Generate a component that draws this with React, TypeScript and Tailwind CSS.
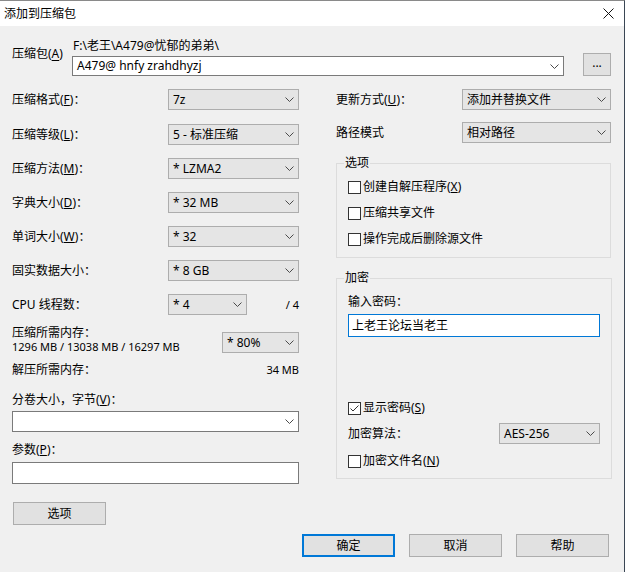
import React from "react";
import clsx from "clsx";
import { twMerge } from "tailwind-merge";

const cn = (...a: Parameters<typeof clsx>) => twMerge(clsx(...a));

const Chevron: React.FC = () => (
  <svg width="9" height="5" viewBox="0 0 9 5" className="shrink-0">
    <path d="M0.5 0.5 L4.5 4.5 L8.5 0.5" fill="none" stroke="#4a4a4a" strokeWidth="1" />
  </svg>
);

const Select: React.FC<{ value?: string; className?: string; white?: boolean }> = ({ value, className, white }) => (
  <div
    className={cn(
      "flex h-[21px] shrink-0 items-center justify-between border pl-[4px] pr-[4px]",
      white ? "border-[#7a7a7a] bg-white" : "border-[#adadad] bg-[#e5e5e5]",
      className
    )}
  >
    <span className="whitespace-pre">{value}</span>
    <Chevron />
  </div>
);

const Check: React.FC<{ checked?: boolean; children: React.ReactNode }> = ({ checked, children }) => (
  <div className="flex h-[14px] items-center gap-[2px]">
    <span className="flex h-[13px] w-[13px] shrink-0 items-center justify-center border border-[#333333] bg-white">
      {checked && (
        <svg width="11" height="11" viewBox="0 0 11 11">
          <path d="M1.5 5.5 L4 8 L9.5 2.5" fill="none" stroke="#333333" strokeWidth="1" />
        </svg>
      )}
    </span>
    <span>{children}</span>
  </div>
);

const Btn: React.FC<{ children: React.ReactNode; primary?: boolean; className?: string }> = ({ children, primary, className }) => (
  <button
    className={cn(
      "flex h-[23px] w-[93px] shrink-0 items-center justify-center bg-[#e1e1e1]",
      primary ? "border-2 border-[#0078d7]" : "border border-[#adadad]",
      className
    )}
  >
    {children}
  </button>
);

const Row: React.FC<{ label: React.ReactNode; value: string; className?: string }> = ({ label, value, className }) => (
  <div className={cn("flex h-[21px] items-center justify-between", className)}>
    <span>{label}</span>
    <Select value={value} className="w-[131px]" />
  </div>
);

export default function App() {
  return (
    <div className="h-[572px] w-[625px] overflow-hidden border-t border-r border-t-[#8a8a8a] border-r-[#3a4654] bg-[#f0f0f0] font-['Noto_Sans','Noto_Sans_CJK_SC',sans-serif] text-[12px] leading-[14px] text-black">
      {/* title bar */}
      <div className="flex h-[25px] items-center justify-between bg-white pl-[4px] pr-[10px]">
        <span>添加到压缩包</span>
        <svg width="11" height="11" viewBox="0 0 11 11">
          <path d="M0.5 0.5 L10.5 10.5 M10.5 0.5 L0.5 10.5" stroke="#111" strokeWidth="1" />
        </svg>
      </div>

      <div className="px-[12px]">
        {/* archive path */}
        <div className="flex items-start pt-[13px]">
          <span className="mt-[8px] w-[60px] shrink-0">
            压缩包(<u className="underline-offset-2">A</u>)
          </span>
          <div className="flex w-[492px] shrink-0 flex-col">
            <span className="pl-[1px]">{"F:\\老王\\A479@忧郁的弟弟\\"}</span>
            <Select white value="A479@ hnfy zrahdhyzj" className="mt-[3px] h-[20px]" />
          </div>
          <Btn className="ml-[19px] mt-[14px] w-[28px] pb-[4px]">...</Btn>
        </div>

        <div className="mt-[13px] flex items-start gap-[37px]">
          {/* left column */}
          <div className="flex w-[287px] shrink-0 flex-col">
            <div className="flex flex-col gap-[13px]">
              <Row label={<>压缩格式(<u>F</u>)：</>} value="7z" />
              <Row label={<>压缩等级(<u>L</u>)：</>} value="5 - 标准压缩" className="mt-[1px]" />
              <Row label={<>压缩方法(<u>M</u>)：</>} value="* LZMA2" />
              <Row label={<>字典大小(<u>D</u>)：</>} value="* 32 MB" />
              <Row label={<>单词大小(<u>W</u>)：</>} value="* 32" />
              <Row label="固实数据大小：" value="* 8 GB" />
              <div className="flex h-[21px] items-center">
                <span className="w-[156px]">CPU 线程数：</span>
                <Select value="* 4" className="w-[79px]" />
                <span className="flex-1 text-right text-[11px]">/ 4</span>
              </div>
            </div>

            <div className="mt-[11px] flex items-start justify-between">
              <div className="flex flex-col">
                <span>压缩所需内存：</span>
                <span className="text-[11px]">1296 MB / 13038 MB / 16297 MB</span>
              </div>
              <Select value="* 80%" className="mt-[6px] w-[77px]" />
            </div>

            <div className="mt-[9px] flex justify-between">
              <span>解压所需内存：</span>
              <span className="text-[11px]">34 MB</span>
            </div>

            <span className="mt-[16px]">
              分卷大小，字节(<u>V</u>)：
            </span>
            <Select white className="mt-[4px]" />

            <span className="mt-[11px]">
              参数(<u>P</u>)：
            </span>
            <div className="mt-[5px] h-[22px] border border-[#7a7a7a] bg-white" />

            <Btn className="ml-[1px] mt-[18px]">选项</Btn>
          </div>

          {/* right column */}
          <div className="flex w-[275px] shrink-0 flex-col">
            <div className="flex h-[21px] items-center justify-between">
              <span>更新方式(<u>U</u>)：</span>
              <Select value="添加并替换文件" className="w-[149px]" />
            </div>
            <div className="mt-[12px] flex h-[21px] items-center justify-between">
              <span>路径模式</span>
              <Select value="相对路径" className="w-[149px]" />
            </div>

            <fieldset className="mt-[13px] border border-[#dcdcdc] px-[11px] pb-[11px]">
              <legend className="ml-[-4px] px-[1px]">选项</legend>
              <div className="mt-[10px] flex flex-col gap-[12px]">
                <Check>
                  创建自解压程序(<u>X</u>)
                </Check>
                <Check>压缩共享文件</Check>
                <Check>操作完成后删除源文件</Check>
              </div>
            </fieldset>

            <fieldset className="mt-[13px] border border-[#dcdcdc] px-[11px] pb-[10px]">
              <legend className="ml-[-4px] px-[1px]">加密</legend>
              <div className="mt-[10px] flex flex-col">
                <span>输入密码：</span>
                <div className="mt-[5px] flex h-[23px] w-[252px] items-center border border-[#0078d7] bg-white pl-[3px]">
                  上老王论坛当老王
                </div>
                <div className="mt-[64px]">
                  <Check checked>
                    显示密码(<u>S</u>)
                  </Check>
                </div>
                <div className="mt-[8px] flex h-[21px] items-center justify-between">
                  <span>加密算法：</span>
                  <Select value="AES-256" className="w-[101px]" />
                </div>
                <div className="mt-[10px]">
                  <Check>
                    加密文件名(<u>N</u>)
                  </Check>
                </div>
              </div>
            </fieldset>
          </div>
        </div>

        {/* bottom buttons */}
        <div className="mt-[9px] flex justify-end gap-[14px] pr-[3px]">
          <Btn primary>确定</Btn>
          <Btn>取消</Btn>
          <Btn>帮助</Btn>
        </div>
      </div>
    </div>
  );
}
